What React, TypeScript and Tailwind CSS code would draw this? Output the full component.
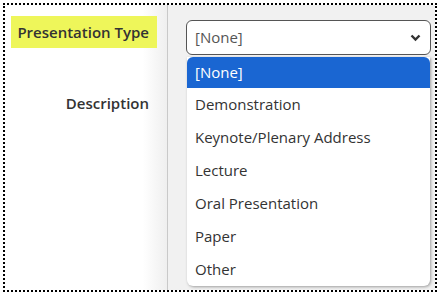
const options = [
  'Demonstration',
  'Keynote/Plenary Address',
  'Lecture',
  'Oral Presentation',
  'Paper',
  'Other',
]

const App = () => {
  return (
    <div className="w-[440px] h-[296px] bg-white p-[3px] font-['Open_Sans',sans-serif]">
      <div className="flex h-[289px] border-2 border-dotted border-black">
        <div className="w-[162px] h-full bg-gradient-to-r from-white from-85% to-[#efefef] flex flex-col items-end pt-[11px] pr-[10px]">
          <div className="w-[146px] h-[32px] bg-[#eef65a] flex items-center justify-end pr-[8px] text-[15px] font-semibold text-[#333]">
            Presentation Type
          </div>
          <div className="mt-[44px] pr-[8px] text-[15px] font-semibold text-[#333]">
            Description
          </div>
        </div>
        <div className="w-px h-full bg-[#c9c9c9]" />
        <div className="relative flex-1 h-full bg-[#f1f1f1] pl-[18px] pr-[2px] pt-[15px]">
          <div className="h-[35px] w-[245px] bg-white border border-[#555] rounded-[6px] flex items-center justify-between pl-[8px] pr-[9px] text-[15px] text-[#555]">
            <span>[None]</span>
            <svg width="11" height="8" viewBox="0 0 11 8">
              <polyline points="1.5,1.5 5.5,5.5 9.5,1.5" fill="none" stroke="#333" strokeWidth="2.4" />
            </svg>
          </div>
          <div className="absolute left-[19px] top-[52px] w-[243px] bg-white rounded-b-[6px] shadow-[1px_1px_3px_rgba(0,0,0,0.35)] overflow-hidden text-[15px] text-[#333]">
            <div className="h-[31px] bg-[#1a66d2] text-white flex items-center pl-[8px] rounded-t-[6px]">
              [None]
            </div>
            {options.map((option) => (
              <div key={option} className="h-[33px] flex items-center pl-[8px]">
                {option}
              </div>
            ))}
          </div>
        </div>
      </div>
    </div>
  )
}

export default App
